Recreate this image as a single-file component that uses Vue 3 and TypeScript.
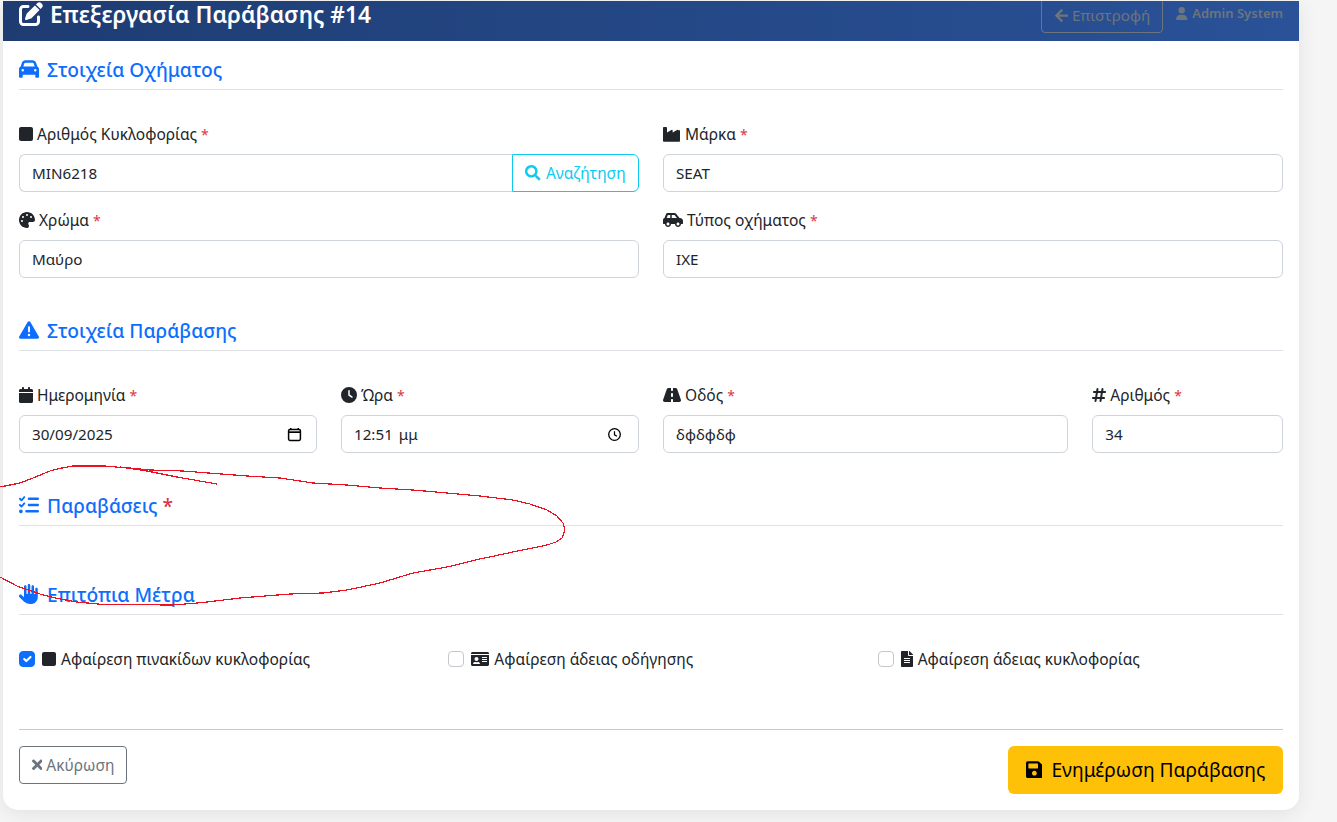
<script setup lang="ts">
// Edit-violation form: vehicle, violation, on-the-spot measures.
type Ico = { w: number; d: string };

const ICONS: Record<string, Ico> = {
  edit: { w: 512, d: "M471.6 21.7c-21.9-21.9-57.3-21.9-79.2 0L362.3 51.7l97.9 97.9 30.1-30.1c21.9-21.9 21.9-57.3 0-79.2L471.6 21.7zm-299.2 220c-6.1 6.1-10.8 13.6-13.5 21.9l-29.6 88.8c-2.9 8.6-.6 18.1 5.8 24.6s15.9 8.7 24.6 5.8l88.8-29.6c8.2-2.7 15.7-7.4 21.9-13.5L437.7 172.3 339.7 74.3 172.4 241.7zM96 64C43 64 0 107 0 160V416c0 53 43 96 96 96H352c53 0 96-43 96-96V320c0-17.7-14.3-32-32-32s-32 14.3-32 32v96c0 17.7-14.3 32-32 32H96c-17.7 0-32-14.3-32-32V160c0-17.7 14.3-32 32-32h96c17.7 0 32-14.3 32-32s-14.3-32-32-32H96z" },
  car: { w: 512, d: "M135.2 117.4L109.1 192H402.9l-26.1-74.6C372.3 104.6 360.2 96 346.6 96H165.4c-13.6 0-25.7 8.6-30.2 21.4zM39.6 196.8L74.8 96.3C88.3 57.8 124.6 32 165.4 32H346.6c40.8 0 77.1 25.8 90.6 64.3l35.2 100.5c23.2 9.6 39.6 32.5 39.6 59.2V400v48c0 17.7-14.3 32-32 32H448c-17.7 0-32-14.3-32-32V400H96v48c0 17.7-14.3 32-32 32H32c-17.7 0-32-14.3-32-32V400 256c0-26.7 16.4-49.6 39.6-59.2zM128 288a32 32 0 1 0 -64 0 32 32 0 1 0 64 0zm288 32a32 32 0 1 0 0-64 32 32 0 1 0 0 64z" },
  square: { w: 448, d: "M64 32C28.7 32 0 60.7 0 96V416c0 35.3 28.7 64 64 64H384c35.3 0 64-28.7 64-64V96c0-35.3-28.7-64-64-64H64z" },
  industry: { w: 576, d: "M0 64C0 46 14 32 32 32h64c18 0 32 14 32 32v143l155-87c11-6 25 2 25 14v73l155-87c11-6 25 2 25 14h56v338c0 18-14 32-32 32H32c-18 0-32-14-32-32z" },
  carSide: { w: 640, d: "M544 192h-16L419.22 56.02A64.025 64.025 0 0 0 369.24 32H155.33c-26.17 0-49.7 15.93-59.42 40.23L48 194.26C20.44 201.4 0 226.21 0 256v112c0 8.84 7.16 16 16 16h48c0 53.02 42.98 96 96 96s96-42.98 96-96h128c0 53.02 42.98 96 96 96s96-42.98 96-96h48c8.84 0 16-7.16 16-16v-80c0-53.02-42.98-96-96-96zM160 432c-26.47 0-48-21.53-48-48s21.53-48 48-48 48 21.53 48 48-21.53 48-48 48zm72-240H116.93l38.4-96H232v96zm48 0V96h89.24l76.8 96H280zm200 240c-26.47 0-48-21.53-48-48s21.53-48 48-48 48 21.53 48 48-21.53 48-48 48z" },
  palette: { w: 512, d: "M512 256c0 .9 0 1.8 0 2.7c-.4 36.5-33.6 61.3-70.1 61.3H344c-26.5 0-48 21.5-48 48c0 3.4 .4 6.7 1 9.9c2.1 10.2 6.5 20 10.8 29.9c6.1 13.8 12.1 27.5 12.1 42c0 31.8-21.6 60.7-53.4 62c-3.5 .1-7 .2-10.6 .2C114.6 512 0 397.4 0 256S114.6 0 256 0S512 114.6 512 256zM128 288a32 32 0 1 0 -64 0 32 32 0 1 0 64 0zm0-96a32 32 0 1 0 0-64 32 32 0 1 0 0 64zM288 96a32 32 0 1 0 -64 0 32 32 0 1 0 64 0zm96 96a32 32 0 1 0 0-64 32 32 0 1 0 0 64z" },
  warn: { w: 512, d: "M256 32c14.2 0 27.3 7.5 34.5 19.8l216 368c7.3 12.4 7.3 27.7 .2 40.1S486.3 480 472 480H40c-14.3 0-27.6-7.7-34.7-20.1s-7-27.8 .2-40.1l216-368C228.7 39.5 241.8 32 256 32zm0 128c-13.3 0-24 10.7-24 24V296c0 13.3 10.7 24 24 24s24-10.7 24-24V184c0-13.3-10.7-24-24-24zm32 224a32 32 0 1 0 -64 0 32 32 0 1 0 64 0z" },
  calendar: { w: 448, d: "M96 32V64H48C21.5 64 0 85.5 0 112v48H448V112c0-26.5-21.5-48-48-48H352V32c0-17.7-14.3-32-32-32s-32 14.3-32 32V64H160V32c0-17.7-14.3-32-32-32S96 14.3 96 32zM448 192H0V464c0 26.5 21.5 48 48 48H400c26.5 0 48-21.5 48-48V192z" },
  clock: { w: 512, d: "M256 0a256 256 0 1 1 0 512A256 256 0 1 1 256 0zM232 120V256c0 8 4 15.5 10.7 20l96 64c11 7.4 25.9 4.4 33.3-6.7s4.4-25.9-6.7-33.3L280 243.2V120c0-13.3-10.7-24-24-24s-24 10.7-24 24z" },
  road: { w: 576, d: "M256 32H181.2c-27.1 0-51.3 17.1-60.3 42.6L3.1 407.2C1.1 413 0 419.2 0 425.4C0 455.5 24.5 480 54.6 480H256V416c0-17.7 14.3-32 32-32s32 14.3 32 32v64H521.4c30.2 0 54.6-24.5 54.6-54.6c0-6.2-1.1-12.4-3.1-18.2L455.1 74.6C446 49.1 421.9 32 394.8 32H320V96c0 17.7-14.3 32-32 32s-32-14.3-32-32V32zm64 192v64c0 17.7-14.3 32-32 32s-32-14.3-32-32V224c0-17.7 14.3-32 32-32s32 14.3 32 32z" },
  hash: { w: 448, d: "M181.3 32.4c17.4 2.9 29.2 19.4 26.3 36.8L197.8 128h95.1l11.5-69.3c2.9-17.4 19.4-29.2 36.8-26.3s29.2 19.4 26.3 36.8L357.8 128H416c17.7 0 32 14.3 32 32s-14.3 32-32 32H347.1L325.8 320H384c17.7 0 32 14.3 32 32s-14.3 32-32 32H315.1l-11.5 69.3c-2.9 17.4-19.4 29.2-36.8 26.3s-29.2-19.4-26.3-36.8l9.8-58.7H155.1l-11.5 69.3c-2.9 17.4-19.4 29.2-36.8 26.3s-29.2-19.4-26.3-36.8L90.2 384H32c-17.7 0-32-14.3-32-32s14.3-32 32-32h68.9l21.3-128H64c-17.7 0-32-14.3-32-32s14.3-32 32-32h68.9l11.5-69.3c2.9-17.4 19.4-29.2 36.8-26.3zM187.1 192L165.8 320h95.1l21.3-128H187.1z" },
  list: { w: 512, d: "M152.1 38.2c9.9 8.9 10.7 24 1.8 33.9l-72 80c-4.4 4.9-10.6 7.8-17.2 7.9s-12.9-2.4-17.6-7L7 113C-2.3 103.6-2.3 88.4 7 79s24.6-9.4 33.9 0l22.1 22.1 55.1-61.2c8.9-9.9 24-10.7 33.9-1.8zm0 160c9.9 8.9 10.7 24 1.8 33.9l-72 80c-4.4 4.9-10.6 7.8-17.2 7.9s-12.9-2.4-17.6-7L7 273c-9.4-9.4-9.4-24.6 0-33.9s24.6-9.4 33.9 0l22.1 22.1 55.1-61.2c8.9-9.9 24-10.7 33.9-1.8zM224 96c0-17.7 14.3-32 32-32H480c17.7 0 32 14.3 32 32s-14.3 32-32 32H256c-17.7 0-32-14.3-32-32zm0 160c0-17.7 14.3-32 32-32H480c17.7 0 32 14.3 32 32s-14.3 32-32 32H256c-17.7 0-32-14.3-32-32zM160 416c0-17.7 14.3-32 32-32H480c17.7 0 32 14.3 32 32s-14.3 32-32 32H192c-17.7 0-32-14.3-32-32zM48 368a48 48 0 1 1 0 96 48 48 0 1 1 0-96z" },
  hand: { w: 512, d: "M288 32c0-17.7-14.3-32-32-32s-32 14.3-32 32V240c0 8.8-7.2 16-16 16s-16-7.2-16-16V64c0-17.7-14.3-32-32-32s-32 14.3-32 32V336c0 1.5 0 3.1 .1 4.6L67.6 283c-16-15.2-41.3-14.6-56.6 1.4s-14.6 41.3 1.4 56.6L124.8 448c43.1 41.1 100.4 64 160 64H304c97.2 0 176-78.8 176-176V128c0-17.7-14.3-32-32-32s-32 14.3-32 32V240c0 8.8-7.2 16-16 16s-16-7.2-16-16V64c0-17.7-14.3-32-32-32s-32 14.3-32 32V240c0 8.8-7.2 16-16 16s-16-7.2-16-16V32z" },
  idCard: { w: 576, d: "M528 32H48C21.5 32 0 53.5 0 80v16h576V80c0-26.5-21.5-48-48-48zM0 432c0 26.5 21.5 48 48 48h480c26.5 0 48-21.5 48-48V128H0v304zm352-232c0-4.4 3.6-8 8-8h144c4.4 0 8 3.6 8 8v16c0 4.4-3.6 8-8 8H360c-4.4 0-8-3.6-8-8v-16zm0 64c0-4.4 3.6-8 8-8h144c4.4 0 8 3.6 8 8v16c0 4.4-3.6 8-8 8H360c-4.4 0-8-3.6-8-8v-16zm0 64c0-4.4 3.6-8 8-8h144c4.4 0 8 3.6 8 8v16c0 4.4-3.6 8-8 8H360c-4.4 0-8-3.6-8-8v-16zM176 192c35.3 0 64 28.7 64 64s-28.7 64-64 64-64-28.7-64-64 28.7-64 64-64zM67.1 396.2C75.5 370.5 99.6 352 128 352h8.2c12.3 5.1 25.7 8 39.8 8s27.6-2.9 39.8-8h8.2c28.4 0 52.5 18.5 60.9 44.2 3.2 9.8-5.2 19.8-15.6 19.8H82.7c-10.4 0-18.8-10-15.6-19.8z" },
  file: { w: 384, d: "M224 136V0H24C10.7 0 0 10.7 0 24v464c0 13.3 10.7 24 24 24h336c13.3 0 24-10.7 24-24V160H248c-13.2 0-24-10.8-24-24zm64 236c0 6.6-5.4 12-12 12H108c-6.6 0-12-5.4-12-12v-8c0-6.6 5.4-12 12-12h168c6.6 0 12 5.4 12 12v8zm0-64c0 6.6-5.4 12-12 12H108c-6.6 0-12-5.4-12-12v-8c0-6.6 5.4-12 12-12h168c6.6 0 12 5.4 12 12v8zm0-72v8c0 6.6-5.4 12-12 12H108c-6.6 0-12-5.4-12-12v-8c0-6.6 5.4-12 12-12h168c6.6 0 12 5.4 12 12zm96-114.1v6.1H256V0h6.1c6.4 0 12.5 2.5 17 7l97.9 98c4.5 4.5 7 10.6 7 16.9z" },
  save: { w: 448, d: "M433.941 129.941l-83.882-83.882A48 48 0 0 0 316.118 32H48C21.49 32 0 53.49 0 80v352c0 26.51 21.49 48 48 48h352c26.51 0 48-21.49 48-48V163.882a48 48 0 0 0-14.059-33.941zM224 416c-35.346 0-64-28.654-64-64 0-35.346 28.654-64 64-64s64 28.654 64 64c0 35.346-28.654 64-64 64zm96-304.52V212c0 6.627-5.373 12-12 12H76c-6.627 0-12-5.373-12-12V108c0-6.627 5.373-12 12-12h228.52c3.183 0 6.235 1.264 8.485 3.515l3.48 3.48A11.996 11.996 0 0 1 320 111.48z" },
  times: { w: 352, d: "M242.72 256l100.07-100.07c12.28-12.28 12.28-32.19 0-44.48l-22.24-22.24c-12.28-12.28-32.19-12.28-44.48 0L176 189.28 75.93 89.21c-12.28-12.28-32.19-12.28-44.48 0L9.21 111.45c-12.28 12.28-12.28 32.19 0 44.48L109.28 256 9.21 356.07c-12.28 12.28-12.28 32.19 0 44.48l22.24 22.24c12.28 12.28 32.2 12.28 44.48 0L176 322.72l100.07 100.07c12.28 12.28 32.2 12.28 44.48 0l22.24-22.24c12.28-12.28 12.28-32.19 0-44.48L242.72 256z" },
  back: { w: 448, d: "M257.5 445.1l-22.2 22.2c-9.4 9.4-24.6 9.4-33.9 0L7 273c-9.4-9.4-9.4-24.6 0-33.9L201.4 44.7c9.4-9.4 24.6-9.4 33.9 0l22.2 22.2c9.5 9.5 9.3 25-.4 34.3L136.6 216H424c13.3 0 24 10.7 24 24v32c0 13.3-10.7 24-24 24H136.6l120.5 114.8c9.8 9.3 10 24.8.4 34.3z" },
  user: { w: 448, d: "M224 256A128 128 0 1 0 224 0a128 128 0 1 0 0 256zm-45.7 48C79.8 304 0 383.8 0 482.3C0 498.7 13.3 512 29.7 512H418.3c16.4 0 29.7-13.3 29.7-29.7C448 383.8 368.2 304 269.7 304H178.3z" },
  search: { w: 512, d: "M505 442.7L405.3 343c-4.5-4.5-10.6-7-17-7H372c27.6-35.3 44-79.7 44-128C416 93.1 322.9 0 208 0S0 93.1 0 208s93.1 208 208 208c48.3 0 92.7-16.4 128-44v16.3c0 6.4 2.5 12.5 7 17l99.7 99.7c9.4 9.4 24.6 9.4 33.9 0l28.3-28.3c9.4-9.4 9.4-24.6.1-34zM208 336c-70.7 0-128-57.2-128-128 0-70.7 57.2-128 128-128 70.7 0 128 57.2 128 128 0 70.7-57.2 128-128 128z" },
};

const MEASURES = [
  { icon: "square", label: "Αφαίρεση πινακίδων κυκλοφορίας", on: true },
  { icon: "idCard", label: "Αφαίρεση άδειας οδήγησης", on: false },
  { icon: "file", label: "Αφαίρεση άδειας κυκλοφορίας", on: false },
];

const VIOLATION_FIELDS = [
  { icon: "calendar", label: "Ημερομηνία", value: "30/09/2025", span: 3, picker: "date" },
  { icon: "clock", label: "Ώρα", value: "12:51 μμ", span: 3, picker: "time" },
  { icon: "road", label: "Οδός", value: "δφδφδφ", span: 4, picker: "" },
  { icon: "hash", label: "Αριθμός", value: "34", span: 2, picker: "" },
];

// hand-drawn red ring somebody left on the screenshot
const SCRIBBLE =
  "M0 487 L20 483 L33 478 L50 471 L62 468 L73 466 L105 466 L127 468 L147 471 L177 477 L217 484 " +
  "M120 467 L150 470 L183 471 L247 476 L280 478 L313 483 L347 485 L380 488 L413 490 L447 493 L480 496 L513 500 L530 504 L547 510 L557 516 L563 523 L565 530 L562 538 L556 542 L547 545 L513 552 L480 559 L447 567 L413 573 L380 583 L347 590 L323 593 L290 594 L240 598 L203 602.5 L173 605 L103 604.5 L77 602 L55 598 L40 594 L17 586 L0 577";
</script>

<template>
  <div class="page">
    <div class="card">
      <header class="card-head">
        <h4 class="head-title">
          <svg class="ico" :viewBox="`0 0 ${ICONS.edit.w} 512`"><path :d="ICONS.edit.d" /></svg>
          Επεξεργασία Παράβασης #14
        </h4>
        <div class="head-actions">
          <a class="btn-back">
            <svg class="ico" :viewBox="`0 0 ${ICONS.back.w} 512`"><path :d="ICONS.back.d" /></svg>
            Επιστροφή
          </a>
          <span class="head-user">
            <svg class="ico" :viewBox="`0 0 ${ICONS.user.w} 512`"><path :d="ICONS.user.d" /></svg>
            Admin System
          </span>
        </div>
      </header>

      <div class="card-body">
        <section class="block block-vehicle">
          <h5 class="block-title">
            <svg class="ico" :viewBox="`0 0 ${ICONS.car.w} 512`"><path :d="ICONS.car.d" /></svg>
            Στοιχεία Οχήματος
          </h5>
          <div class="grid">
            <div class="field s6">
              <label class="lbl">
                <svg class="ico" :viewBox="`0 0 ${ICONS.square.w} 512`"><path :d="ICONS.square.d" /></svg>
                Αριθμός Κυκλοφορίας <span class="req">*</span>
              </label>
              <div class="input-group">
                <div class="control joined">MIN6218</div>
                <button class="btn-search">
                  <svg class="ico" :viewBox="`0 0 ${ICONS.search.w} 512`"><path :d="ICONS.search.d" /></svg>
                  Αναζήτηση
                </button>
              </div>
            </div>
            <div class="field s6">
              <label class="lbl">
                <svg class="ico" :viewBox="`0 0 ${ICONS.industry.w} 512`"><path :d="ICONS.industry.d" /></svg>
                Μάρκα <span class="req">*</span>
              </label>
              <div class="control">SEAT</div>
            </div>
            <div class="field s6">
              <label class="lbl">
                <svg class="ico" :viewBox="`0 0 ${ICONS.palette.w} 512`"><path :d="ICONS.palette.d" /></svg>
                Χρώμα <span class="req">*</span>
              </label>
              <div class="control">Μαύρο</div>
            </div>
            <div class="field s6">
              <label class="lbl">
                <svg class="ico" :viewBox="`0 0 ${ICONS.carSide.w} 512`"><path :d="ICONS.carSide.d" /></svg>
                Τύπος οχήματος <span class="req">*</span>
              </label>
              <div class="control">ΙΧΕ</div>
            </div>
          </div>
        </section>

        <section class="block block-violation">
          <h5 class="block-title">
            <svg class="ico" :viewBox="`0 0 ${ICONS.warn.w} 512`"><path :d="ICONS.warn.d" /></svg>
            Στοιχεία Παράβασης
          </h5>
          <div class="grid">
            <div v-for="f in VIOLATION_FIELDS" :key="f.label" class="field" :class="`s${f.span}`">
              <label class="lbl">
                <svg class="ico" :viewBox="`0 0 ${ICONS[f.icon].w} 512`"><path :d="ICONS[f.icon].d" /></svg>
                {{ f.label }} <span class="req">*</span>
              </label>
              <div class="control with-picker">
                <span class="val">{{ f.value }}</span>
                <svg v-if="f.picker === 'date'" class="picker" viewBox="0 0 16 16">
                  <path d="M4 1v2M12 1v2" fill="none" stroke="#000" stroke-width="1.7" />
                  <rect x="1.7" y="2.7" width="12.6" height="11.6" rx="1.4" fill="none" stroke="#000" stroke-width="1.6" />
                  <path d="M2 4.6h12v1.8H2z" fill="#000" />
                </svg>
                <svg v-else-if="f.picker === 'time'" class="picker picker-time" viewBox="0 0 16 16">
                  <circle cx="8" cy="8" r="6.2" fill="none" stroke="#000" stroke-width="1.4" />
                  <path d="M8 4.4V8.4L10.6 9.8" fill="none" stroke="#000" stroke-width="1.3" />
                </svg>
              </div>
            </div>
          </div>
        </section>

        <section class="block block-list">
          <h5 class="block-title">
            <svg class="ico" :viewBox="`0 0 ${ICONS.list.w} 512`"><path :d="ICONS.list.d" /></svg>
            Παραβάσεις <span class="req">*</span>
          </h5>
        </section>

        <section class="block block-measures">
          <h5 class="block-title">
            <svg class="ico" :viewBox="`0 0 ${ICONS.hand.w} 512`"><path :d="ICONS.hand.d" /></svg>
            Επιτόπια Μέτρα
          </h5>
          <div class="grid">
            <label v-for="m in MEASURES" :key="m.label" class="check s4">
              <span class="box" :class="{ on: m.on }">
                <svg v-if="m.on" viewBox="0 0 20 20"><path d="m6 10 3 3 6-6" fill="none" stroke="#fff" stroke-width="3" stroke-linecap="round" stroke-linejoin="round" /></svg>
              </span>
              <svg class="ico" :viewBox="`0 0 ${ICONS[m.icon].w} 512`"><path :d="ICONS[m.icon].d" /></svg>
              {{ m.label }}
            </label>
          </div>
        </section>

        <footer class="actions">
          <button class="btn-cancel">
            <svg class="ico" :viewBox="`0 0 ${ICONS.times.w} 512`"><path :d="ICONS.times.d" /></svg>
            Ακύρωση
          </button>
          <button class="btn-save">
            <svg class="ico" :viewBox="`0 0 ${ICONS.save.w} 512`"><path :d="ICONS.save.d" /></svg>
            Ενημέρωση Παράβασης
          </button>
        </footer>
      </div>
    </div>

    <svg class="scribble" width="1337" height="822" viewBox="0 0 1337 822">
      <path :d="SCRIBBLE" fill="none" stroke="#ee1122" stroke-width="1.2" />
    </svg>
  </div>
</template>

<style scoped>
.page {
  position: relative;
  min-height: 822px;
  box-sizing: border-box;
  padding: 1px 38px 12px 3px;
  overflow: hidden;
  background: #f5f5f5;
  font-family: "Noto Sans", "Open Sans", sans-serif;
  font-size: 15.5px;
  line-height: 22px;
  color: #212529;
}
.card {
  background: #fff;
  border-radius: 0 0 15px 15px;
  box-shadow: 0 4px 20px rgba(0, 0, 0, 0.08);
  overflow: hidden;
}
.ico {
  height: 1em;
  width: auto;
  fill: currentColor;
  vertical-align: -0.125em;
  flex: none;
}
.card-head {
  height: 40px;
  box-sizing: border-box;
  display: flex;
  justify-content: space-between;
  align-items: flex-end;
  padding: 0 16px 8px;
  background: linear-gradient(90deg, #1e3c72, #2a5298);
  overflow: hidden;
}
.head-title {
  margin: 0 0 5px;
  font-size: 22.7px;
  line-height: 26px;
  font-weight: 600;
  color: #fff;
}
.head-title .ico {
  height: 24px;
  margin-right: 1px;
}
.head-actions {
  display: flex;
  align-items: flex-end;
  gap: 13px;
}
.btn-back {
  display: block;
  box-sizing: border-box;
  width: 122px;
  height: 38px;
  border: 1px solid #6c757d;
  border-radius: 4px;
  padding: 8px 0 0;
  text-align: center;
  font-size: 15.2px;
  color: #6c757d;
}
.head-user {
  margin-bottom: 11px;
  font-size: 13px;
  line-height: 18px;
  font-weight: 600;
  color: #6c757d;
}
.head-user .ico {
  margin-right: 1px;
}
.card-body {
  padding: 16px;
}
.block {
  display: flow-root;
}
.block-title {
  margin: 0;
  height: 33px;
  box-sizing: border-box;
  border-bottom: 1px solid #dee2e6;
  font-size: 19.2px;
  line-height: 26px;
  font-weight: 500;
  color: #0d6efd;
}
.block-title .ico {
  height: 20px;
  margin-right: 3px;
}
.grid {
  display: grid;
  grid-template-columns: repeat(12, 1fr);
  column-gap: 24px;
  row-gap: 16px;
  margin-top: 32px;
}
.s6 { grid-column: span 6; }
.s4 { grid-column: span 4; }
.s3 { grid-column: span 3; }
.s2 { grid-column: span 2; }
.lbl {
  display: block;
  height: 24px;
  margin-bottom: 8px;
  line-height: 24px;
}
.lbl .ico,
.check .ico {
  height: 16px;
}
.req {
  font-size: 14px;
  color: #dc3545;
}
.block-title .req {
  font-size: 19.2px;
}
.control {
  box-sizing: border-box;
  height: 38px;
  padding: 7px 12px;
  border: 1px solid #ced4da;
  border-radius: 6px;
  background: #fff;
  font-size: 15.2px;
}
.with-picker {
  display: flex;
  justify-content: space-between;
  align-items: center;
}
.val {
  word-spacing: 2px;
}
.picker {
  width: 15px;
  height: 15px;
  margin-right: 2px;
}
.picker-time {
  margin-right: 4px;
}
.input-group {
  display: flex;
}
.joined {
  flex: 1;
  border-right: none;
  border-radius: 6px 0 0 6px;
}
.btn-search {
  width: 127px;
  height: 38px;
  padding: 0;
  border: 1px solid #0dcaf0;
  border-radius: 0 6px 6px 0;
  background: #fff;
  color: #0dcaf0;
  font: inherit;
}
.btn-search .ico {
  margin-right: 1px;
}
.block-violation { margin-top: 40px; }
.block-list { margin-top: 40px; height: 89px; }
.block-measures { margin-top: 0; }
.block-measures .grid { margin-top: 33px; }
.check {
  display: flex;
  align-items: center;
  gap: 5px;
}
.box {
  width: 16px;
  height: 16px;
  box-sizing: border-box;
  margin-right: 2px;
  border: 1px solid #c4c8cc;
  border-radius: 4px;
  flex: none;
}
.box.on {
  border-color: #0d6efd;
  background: #0d6efd;
}
.box svg {
  display: block;
}
.actions {
  display: flex;
  justify-content: space-between;
  align-items: flex-start;
  margin-top: 59px;
  padding-top: 16px;
  border-top: 1px solid #c8c8c8;
}
.btn-cancel {
  width: 108px;
  height: 38px;
  padding: 0;
  border: 1px solid #6c757d;
  border-radius: 4px;
  background: #fff;
  color: #6c757d;
  font: inherit;
}
.btn-save {
  width: 275px;
  height: 48px;
  padding: 0;
  border: none;
  border-radius: 6px;
  background: #ffc107;
  color: #000;
  font: inherit;
  font-size: 19.2px;
}
.btn-save .ico {
  margin-right: 4px;
}
.scribble {
  position: absolute;
  top: 0;
  left: 0;
  pointer-events: none;
  shape-rendering: crispEdges;
}
</style>
